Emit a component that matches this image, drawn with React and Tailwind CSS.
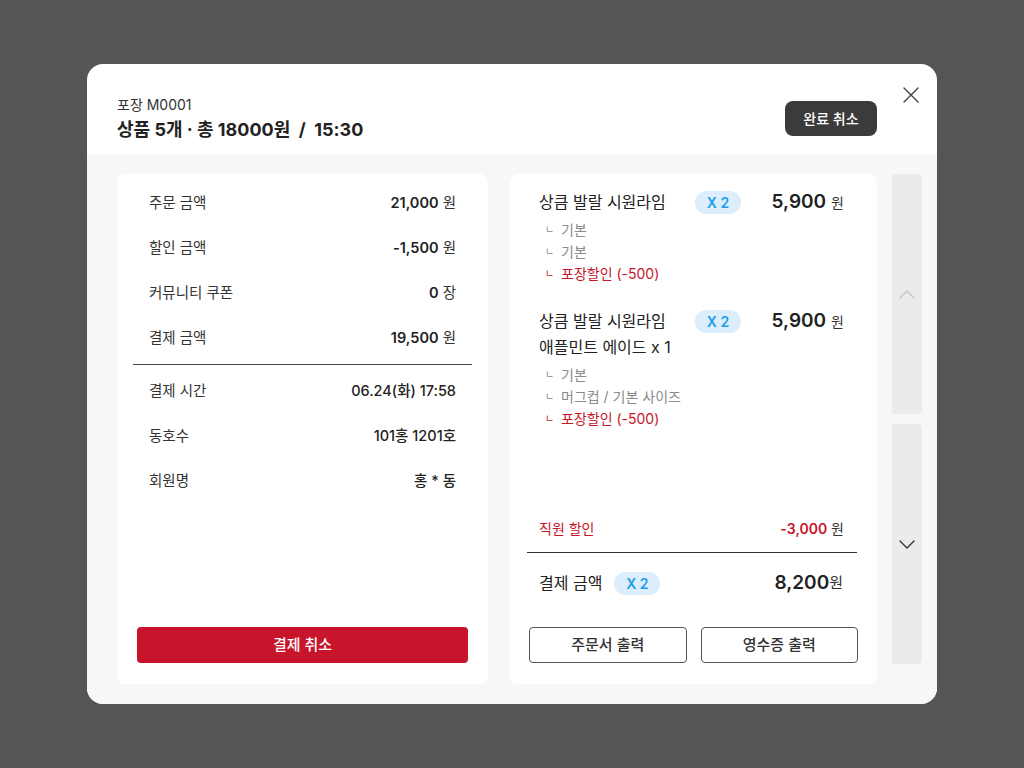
import React from 'react';

const summary = [
  { label: '주문 금액', value: '21,000', unit: '원' },
  { label: '할인 금액', value: '-1,500', unit: '원' },
  { label: '커뮤니티 쿠폰', value: '0', unit: '장' },
  { label: '결제 금액', value: '19,500', unit: '원' },
];

const info = [
  { label: '결제 시간', value: '06.24(화) 17:58' },
  { label: '동호수', value: '101홍 1201호' },
  { label: '회원명', value: '홍 * 동' },
];

const items = [
  {
    lines: ['상큼 발랄 시원라임'],
    price: '5,900',
    options: [
      { text: '기본' },
      { text: '기본' },
      { text: '포장할인 (-500)', red: true },
    ],
  },
  {
    lines: ['상큼 발랄 시원라임', '애플민트 에이드 x 1'],
    price: '5,900',
    options: [
      { text: '기본' },
      { text: '머그컵 / 기본 사이즈' },
      { text: '포장할인 (-500)', red: true },
    ],
  },
];

const Badge = () => (
  <span className="inline-flex items-center justify-center w-[46px] h-[23px] rounded-full bg-[#dcedfb] text-[#1a9ee8] text-[14px] font-semibold">
    X 2
  </span>
);

const Chevron = ({ up, color }) => (
  <svg width="16" height="9" viewBox="0 0 16 9" fill="none">
    <polyline
      points={up ? '1,8 8,1 15,8' : '1,1 8,8 15,1'}
      stroke={color}
      strokeWidth="1.4"
      strokeLinecap="round"
      strokeLinejoin="round"
    />
  </svg>
);

export default function App() {
  return (
    <div className="w-full h-screen bg-[#555555] flex items-center justify-center font-['Inter','Noto_Sans_CJK_KR',sans-serif] text-[#222]">
      <div className="relative w-[850px] h-[640px] bg-white rounded-[16px] overflow-hidden flex flex-col">
        {/* Header */}
        <div className="h-[90px] shrink-0 flex justify-between items-start pl-[30px] pr-[60px] pt-[31px]">
          <div>
            <div className="text-[14px] leading-[20px] text-[#333]">포장 M0001</div>
            <div className="mt-[2px] text-[18px] leading-[26px] font-bold text-[#222] whitespace-pre">상품 5개 · 총 18000원  /  15:30</div>
          </div>
          <button className="mt-[6px] w-[92px] h-[35px] rounded-[8px] bg-[#3b3b3b] text-white text-[14px] font-medium">
            완료 취소
          </button>
        </div>
        <button className="absolute top-[23px] right-[18px] w-4 h-4">
          <svg width="16" height="16" viewBox="0 0 16 16" fill="none">
            <path d="M1 1L15 15M15 1L1 15" stroke="#444" strokeWidth="1.4" strokeLinecap="round" />
          </svg>
        </button>

        {/* Body */}
        <div className="flex-1 bg-[#f6f7f9] flex pl-[30px] pr-[15px] py-[20px]">
          {/* Left panel */}
          <div className="w-[371px] bg-white rounded-[8px] flex flex-col px-4 pt-[6px]">
            {summary.map((r) => (
              <div key={r.label} className="h-[45px] flex items-center justify-between px-4 text-[14.5px]">
                <span className="text-[#333]">{r.label}</span>
                <span>
                  <span className="font-semibold text-[#222]">{r.value}</span>
                  <span className="text-[#333]"> {r.unit}</span>
                </span>
              </div>
            ))}
            <div className="mt-[4px] mb-[3px] h-px bg-[#444]" />
            {info.map((r) => (
              <div key={r.label} className="h-[45px] flex items-center justify-between px-4 text-[14.5px]">
                <span className="text-[#333]">{r.label}</span>
                <span className="font-medium text-[#222]">{r.value}</span>
              </div>
            ))}
            <div className="mt-auto px-1 pb-[21px]">
              <button className="w-full h-[36px] rounded-[4px] bg-[#c8152b] text-white text-[15px] font-medium">
                결제 취소
              </button>
            </div>
          </div>

          {/* Right panel */}
          <div className="ml-[22px] w-[367px] bg-white rounded-[8px] flex flex-col">
            <div className="flex-1 pl-[29px] pr-[33px] pt-[15px] flex flex-col gap-[24px]">
              {items.map((it, i) => (
                <div key={i}>
                  <div className="flex items-start">
                    <div className="w-[150px] text-[16px] leading-[26px] text-[#222]">
                      {it.lines.map((l) => (
                        <div key={l} className="whitespace-nowrap">{l}</div>
                      ))}
                    </div>
                    <div className="ml-[6px] h-[26px] flex items-center">
                      <Badge />
                    </div>
                    <div className="ml-auto h-[26px] flex items-center">
                      <span className="text-[19px] font-semibold text-[#222]">{it.price}</span>
                      <span className="ml-[5px] text-[14px] text-[#333]">원</span>
                    </div>
                  </div>
                  <div className="mt-[3px] pl-[6px]">
                    {it.options.map((o, j) => (
                      <div
                        key={j}
                        className={`flex items-center h-[22px] text-[14px] ${o.red ? 'text-[#c8152b]' : 'text-[#8a8a8a]'}`}
                      >
                        <span className="w-4 text-[10px]">ㄴ</span>
                        <span>{o.text}</span>
                      </div>
                    ))}
                  </div>
                </div>
              ))}
            </div>

            <div className="pl-[29px] pr-[33px] h-[22px] flex items-center justify-between text-[14px]">
              <span className="text-[#c8152b]">직원 할인</span>
              <span>
                <span className="font-semibold text-[#c8152b]">-3,000</span>
                <span className="text-[#333]"> 원</span>
              </span>
            </div>
            <div className="ml-[17px] mr-[20px] mt-[13px] h-px bg-[#333]" />
            <div className="mt-[15px] h-[30px] pl-[29px] pr-[34px] flex items-center">
              <span className="text-[16px] text-[#222]">결제 금액</span>
              <span className="ml-[12px]">
                <Badge />
              </span>
              <span className="ml-auto text-[19px] font-semibold text-[#222]">8,200</span>
              <span className="text-[15px] text-[#333]">원</span>
            </div>
            <div className="mt-[29px] mb-[21px] px-[19px] flex gap-[14px]">
              <button className="flex-1 h-[36px] rounded-[4px] border border-[#555] text-[15px] font-medium text-[#333]">
                주문서 출력
              </button>
              <button className="flex-1 h-[36px] rounded-[4px] border border-[#555] text-[15px] font-medium text-[#333]">
                영수증 출력
              </button>
            </div>
          </div>

          {/* Scroll controls */}
          <div className="ml-[15px] w-[30px] h-[490px] flex flex-col gap-[10px]">
            <button className="flex-1 rounded-[4px] bg-[#ebebeb] flex items-center justify-center">
              <Chevron up color="#c4c4c4" />
            </button>
            <button className="flex-1 rounded-[4px] bg-[#ebebeb] flex items-center justify-center">
              <Chevron color="#333" />
            </button>
          </div>
        </div>
      </div>
    </div>
  );
}
